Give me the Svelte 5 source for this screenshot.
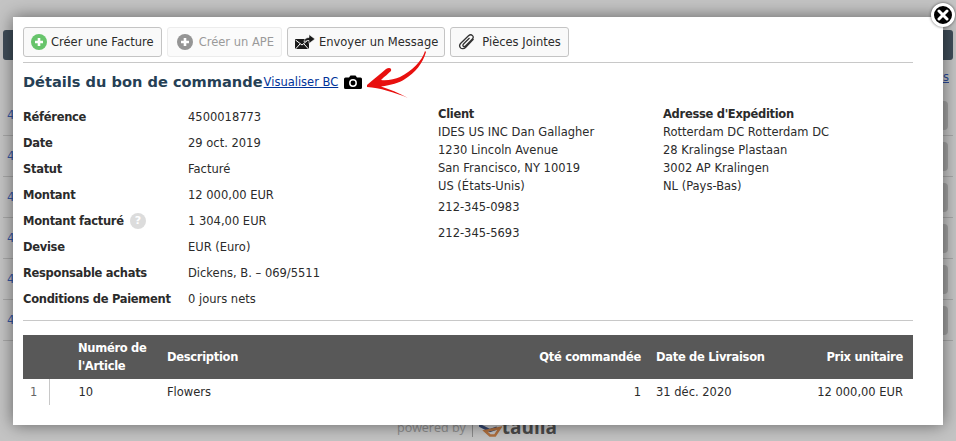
<script>
  const rows = [
    { label: "Référence", value: "4500018773" },
    { label: "Date", value: "29 oct. 2019" },
    { label: "Statut", value: "Facturé" },
    { label: "Montant", value: "12 000,00 EUR" },
    { label: "Montant facturé", value: "1 304,00 EUR", help: true },
    { label: "Devise", value: "EUR (Euro)" },
    { label: "Responsable achats", value: "Dickens, B. – 069/5511" },
    { label: "Conditions de Paiement", value: "0 jours nets" },
  ];
  const behind = [1, 2, 3, 4, 5, 6];
</script>

<div class="page">
  <div class="behindBar"></div>
  <div class="behindLink">s</div>
  <div class="behindRows">
    {#each behind as r}
      <div class="behindRow">
        <span class="behindNum">4</span>
        <span class="behindBtn"></span>
      </div>
    {/each}
  </div>
  <div class="powered">
    <span>powered by</span>
    <i class="poweredSep"></i>
    <svg width="23" height="20" viewBox="0 0 23 20">
      <path d="M0 8 L11 13.500 L18 11" fill="none" stroke="#34466e" stroke-width="3" />
      <path d="M6 14 L21 11 L16 18.500 L11 18.500 Z" fill="none" stroke="#b0703f" stroke-width="2.500" />
    </svg>
    <span class="poweredName">taulia</span>
  </div>

  <div class="modal">
    <div class="close">
      <svg width="12" height="12" viewBox="0 0 12 12">
        <path d="M2 2 L10 10 M10 2 L2 10" stroke="#fff" stroke-width="3" stroke-linecap="round" />
      </svg>
    </div>

    <div class="toolbar">
      <button class="btn first">
        <svg width="16" height="16" viewBox="0 0 16 16">
          <circle cx="8" cy="8" r="8" fill="#67c46b" />
          <path d="M8 4 V12 M4 8 H12" stroke="#fff" stroke-width="2.6" />
        </svg>
        Créer une Facture
      </button>
      <button class="btn disabled">
        <svg width="16" height="16" viewBox="0 0 16 16">
          <circle cx="8" cy="8" r="8" fill="#959595" />
          <path d="M8 4 V12 M4 8 H12" stroke="#fff" stroke-width="2.6" />
        </svg>
        Créer un APE
      </button>
      <button class="btn tight">
        <svg width="20" height="16" viewBox="0 0 20 16">
          <path d="M0 5 H11 L11 7 L14 7 V15 H0 Z" fill="#1a1a1a" />
          <path d="M0.5 6 L7 11 L13 6 M0.5 15 L5 10 M13.500 15 L9 10" fill="none" stroke="#fff" stroke-width="1" />
          <path d="M9 8 C9 5 11 3.500 14 3.500 V0.500 L20 5 L14 9.500 V6.500 C12 6.500 10.500 7 9 8 Z" fill="#1a1a1a" stroke="#fff" stroke-width="0.6" />
        </svg>
        Envoyer un Message
      </button>
      <button class="btn clip">
        <svg width="18" height="18" viewBox="0 0 18 18">
          <path d="M15.500 6 L7.500 14.500 C6 16 3.500 16 2.500 14.800 C1.300 13.500 1.500 11.500 3 10 L10.500 2.800 C11.800 1.600 13.500 1.600 14.500 2.600 C15.500 3.700 15.300 5.200 14.200 6.300 L7.500 13 C6.800 13.700 5.800 13.700 5.300 13.200 C4.700 12.600 4.800 11.800 5.500 11 L11.500 5" fill="none" stroke="#333" stroke-width="1.300" />
        </svg>
        Pièces Jointes
      </button>
    </div>

    <div class="titleRow">
      <h2>Détails du bon de commande</h2>
      <a href="#top">Visualiser BC</a>
      <svg class="camera" width="18" height="14" viewBox="0 0 18 14">
        <path d="M1.500 2.500 H5 L6.500 0.500 H11.500 L13 2.500 H16.500 Q18 2.500 18 4 V12.500 Q18 14 16.500 14 H1.500 Q0 14 0 12.500 V4 Q0 2.500 1.500 2.500 Z" fill="#000" />
        <circle cx="9" cy="8" r="3.200" fill="none" stroke="#fff" stroke-width="1.500" />
      </svg>
    </div>

    <svg class="arrow" width="60" height="48" viewBox="0 0 60 48">
      <path d="M58 0 C55 10 45 20 33 26 C28 28 20 30 14 29 C18 25 21 23 24 20 C25 17 22 16 19 18 C13 23 6 29 0 34 L0 36 C13 37 27 41 41 47 C32 42 22 38 14 35.500 C24 34 32 32 38 28 C48 22 56 12 59 1 Z" fill="#e8100f" />
    </svg>

    <div class="info">
      <div class="facts">
        {#each rows as row}
          <div class="factLabel">
            {row.label}
            {#if row.help}<span class="help">?</span>{/if}
          </div>
          <div class="factValue">{row.value}</div>
        {/each}
      </div>
      <div class="address client">
        <strong>Client</strong>
        <div>IDES US INC Dan Gallagher</div>
        <div>1230 Lincoln Avenue</div>
        <div>San Francisco, NY 10019</div>
        <div>US (États-Unis)</div>
        <div class="phone">212-345-0983</div>
        <div class="phone second">212-345-5693</div>
      </div>
      <div class="address">
        <strong>Adresse d'Expédition</strong>
        <div>Rotterdam DC Rotterdam DC</div>
        <div>28 Kralingse Plastaan</div>
        <div>3002 AP Kralingen</div>
        <div>NL (Pays-Bas)</div>
      </div>
    </div>

    <table>
      <thead>
        <tr>
          <th class="cIndex"></th>
          <th class="cNum">Numéro de l'Article</th>
          <th class="cDesc">Description</th>
          <th class="cQty right">Qté commandée</th>
          <th class="cDate">Date de Livraison</th>
          <th class="cPrice right">Prix unitaire</th>
        </tr>
      </thead>
      <tbody>
        <tr>
          <td class="index">1</td>
          <td class="num">10</td>
          <td>Flowers</td>
          <td class="right">1</td>
          <td class="date">31 déc. 2020</td>
          <td class="right">12 000,00 EUR</td>
        </tr>
      </tbody>
    </table>
  </div>
</div>

<style>
  :global(body) {
    margin: 0;
    overflow: hidden;
  }

  .page {
    position: relative;
    width: 956px;
    height: 441px;
    overflow: hidden;
    background: #c4c4c4;
    font-family: "DejaVu Sans", sans-serif;
    font-size: 11.5px;
    color: #2b2b2b;
  }

  .behindBar {
    position: absolute;
    left: 3px;
    top: 30px;
    width: 950px;
    height: 30px;
    background: #3f4d59;
    border-radius: 3px;
  }

  .behindLink {
    position: absolute;
    right: 7px;
    top: 70px;
    color: #2a4a9a;
    text-decoration: underline;
  }

  .behindRows {
    position: absolute;
    left: 3px;
    top: 95px;
    width: 950px;
  }

  .behindRow {
    height: 40px;
    border-bottom: 1px solid #a8a8a8;
    display: flex;
    justify-content: space-between;
    align-items: center;
    padding: 0 5px 0 4px;
  }

  .behindNum {
    color: #3557a5;
    font-size: 12px;
  }

  .behindBtn {
    width: 30px;
    height: 29px;
    border-radius: 4px;
    background: #a2a2a2;
  }

  .powered {
    position: absolute;
    left: 397px;
    top: 412px;
    display: flex;
    align-items: center;
    gap: 6px;
    height: 30px;
    color: #8c8c8c;
    font-family: "Open Sans", sans-serif;
    font-size: 12.5px;
  }

  .poweredSep {
    width: 1px;
    height: 20px;
    background: #8c8c8c;
  }

  .poweredName {
    color: #4a4a4a;
    font-size: 19px;
    font-weight: 700;
    margin-left: -6px;
  }

  .modal {
    position: absolute;
    left: 13px;
    top: 17px;
    width: 930px;
    height: 408px;
    box-sizing: border-box;
    padding: 10px 30px 0 10px;
    background: #fff;
    box-shadow: 0 0 16px rgba(0, 0, 0, 0.5);
  }

  .close {
    position: absolute;
    right: -12px;
    top: -14px;
    width: 18px;
    height: 18px;
    display: flex;
    align-items: center;
    justify-content: center;
    border: 3px solid #fff;
    border-radius: 50%;
    background: #000;
    box-shadow: 0 0 3px rgba(0, 0, 0, 0.6);
  }

  .toolbar {
    display: flex;
    gap: 5px;
    padding-bottom: 5px;
    border-bottom: 1px solid #c8c8c8;
  }

  .btn {
    display: flex;
    align-items: center;
    gap: 4px;
    height: 30px;
    box-sizing: border-box;
    padding: 0 8px 0 7px;
    border: 1px solid #c4c4c4;
    border-radius: 3px;
    background: #f9f9f9;
    color: #2b2b2b;
    font: inherit;
    white-space: nowrap;
  }

  .btn.first {
    padding-right: 7px;
  }

  .btn.disabled {
    gap: 6px;
    padding-left: 9px;
    padding-right: 7px;
    border-color: #ececec;
    background: #fbfbfb;
    color: #9a9a9a;
  }

  .btn.tight {
    padding-right: 6px;
  }

  .btn.clip {
    gap: 6px;
    padding-right: 7px;
  }

  .titleRow {
    display: flex;
    align-items: center;
    height: 36px;
    box-sizing: border-box;
  }

  h2 {
    margin: 0;
    font-size: 14.6px;
    font-weight: 700;
    color: #263f55;
  }

  a {
    margin: 1px 0 0 1px;
    color: #003399;
    font-size: 11.5px;
  }

  .camera {
    margin: 1px 0 0 6px;
  }

  .arrow {
    position: absolute;
    left: 354px;
    top: 34px;
  }

  .info {
    display: flex;
    height: 221px;
    border-bottom: 1px solid #c8c8c8;
  }

  .facts {
    width: 415px;
    display: grid;
    grid-template-columns: 165px 1fr;
    grid-auto-rows: 26px;
    padding-top: 5px;
    align-items: center;
    align-content: start;
  }

  .factLabel {
    letter-spacing: -0.3px;
    font-weight: 700;
    display: flex;
    align-items: center;
    gap: 6px;
    margin-top: -1px;
  }

  .help {
    width: 16px;
    height: 16px;
    border-radius: 50%;
    background: #dcdcdc;
    color: #fff;
    font-size: 11px;
    text-align: center;
    line-height: 16px;
  }

  .address {
    padding-top: 7px;
    line-height: 18px;
  }

  .address strong {
    display: block;
    letter-spacing: -0.3px;
    line-height: 17px;
  }

  .client {
    width: 225px;
  }

  .phone {
    margin-top: 3px;
  }

  .phone.second {
    margin-top: 8px;
  }

  table {
    width: 890px;
    margin-top: 14px;
    border-collapse: collapse;
    table-layout: fixed;
  }

  th {
    height: 44px;
    padding: 0 10px;
    box-sizing: border-box;
    background: #585858;
    color: #fff;
    font-size: 11.5px;
    letter-spacing: -0.3px;
    font-weight: 700;
    text-align: left;
    line-height: 18px;
  }

  td {
    height: 26px;
    padding: 0 10px;
    box-sizing: border-box;
  }

  .cIndex { width: 26px; }
  .cNum { width: 108px; padding-left: 29px; }
  .cDesc { width: 313px; }
  .cQty { width: 181px; }
  .cDate { width: 142px; padding-left: 5px; }
  .cPrice { width: 120px; }

  .right {
    text-align: right;
  }

  .index {
    color: #666;
    border-right: 1px solid #c8c8c8;
    padding: 0 0 0 7px;
  }

  .num {
    padding-left: 29px;
  }

  .date {
    padding-left: 5px;
  }
</style>
